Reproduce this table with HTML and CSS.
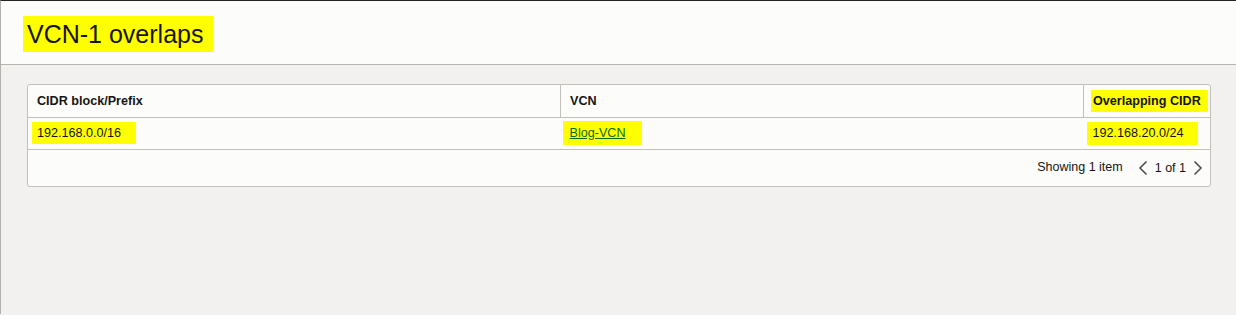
FILE: index.html
```html
<!DOCTYPE html>
<html>
<head>
<meta charset="utf-8">
<link rel="stylesheet" href="styles.css">
</head>
<body>
<div class="page">
  <header class="header">
    <h1 class="title hl">VCN-1 overlaps</h1>
  </header>
  <main class="main">
    <div class="card">
      <table class="grid">
        <thead>
          <tr>
            <th class="c1"><span class="th-text">CIDR block/Prefix</span></th>
            <th class="c2"><span class="th-text">VCN</span></th>
            <th class="c3"><span class="hl hl-h3">Overlapping CIDR</span></th>
          </tr>
        </thead>
        <tbody>
          <tr>
            <td class="c1"><span class="hl hl-b1">192.168.0.0/16</span></td>
            <td class="c2"><span class="hl hl-b2"><a class="link" href="#">Blog-VCN</a></span></td>
            <td class="c3"><span class="hl hl-b3">192.168.20.0/24</span></td>
          </tr>
        </tbody>
      </table>
      <div class="footer">
        <span class="count">Showing 1 item</span>
        <div class="pager">
          <svg class="chev" width="10" height="16" viewBox="0 0 10 16"><path d="M8.5 1.5 L2 8 L8.5 14.5" fill="none" stroke="#4a4a4a" stroke-width="1.5"/></svg>
          <span class="pages">1 of 1</span>
          <svg class="chev" width="10" height="16" viewBox="0 0 10 16"><path d="M1.5 1.5 L8 8 L1.5 14.5" fill="none" stroke="#4a4a4a" stroke-width="1.5"/></svg>
        </div>
      </div>
    </div>
  </main>
</div>
</body>
</html>
```
FILE: styles.css
```css
html, body {
  margin: 0;
  padding: 0;
  height: 100%;
}
body {
  font-family: "Liberation Sans", Arial, sans-serif;
  color: #161513;
  background: #f2f1ef;
}
.page {
  border-top: 1px solid #242322;
  border-left: 1px solid #b5b1aa;
  min-height: 314px;
  box-sizing: border-box;
  background: #f2f1ef;
}
.header {
  background: #fcfcfb;
  border-bottom: 1px solid #b9b5ae;
  padding: 15px 0 0 22px;
  height: 48px;
}
.title {
  margin: 0;
  display: inline-block;
  font-weight: normal;
  font-size: 25px;
  line-height: 36px;
  padding: 0 10px 0 4px;
  color: #161513;
}
.hl {
  background: #ffff00;
}
.main {
  padding: 19px 25px 0 26px;
}
.card {
  background: #fcfcfb;
  border: 1px solid #c3c0ba;
  border-radius: 3px;
}
.grid {
  width: 100%;
  border-collapse: collapse;
  table-layout: fixed;
  font-size: 12.6px;
}
.grid .c1 { width: 532px; }
.grid .c2 { width: 522px; }
th, td {
  text-align: left;
  padding: 0;
  vertical-align: middle;
}
thead tr {
  height: 32px;
  border-bottom: 1px solid #c3c0ba;
}
tbody tr {
  height: 32px;
  border-bottom: 1px solid #c3c0ba;
}
th {
  font-weight: bold;
}
th.c1, th.c2 {
  border-right: 1px solid #c3c0ba;
}
.th-text {
  padding-left: 9px;
}
.hl-h3 {
  display: inline-block;
  margin-left: 7px;
  padding: 0 7px 0 2px;
  line-height: 22px;
}
.hl-b1 {
  display: inline-block;
  margin-left: 4px;
  padding: 0 15px 0 5px;
  line-height: 22px;
}
.hl-b2 {
  display: inline-block;
  margin-left: 2px;
  padding: 0 16px 0 7px;
  line-height: 24px;
}
.hl-b3 {
  display: inline-block;
  margin-left: 3px;
  padding: 0 14px 0 6px;
  line-height: 23px;
}
.link {
  color: #0b6a12;
  text-decoration: underline;
}
.footer {
  height: 36px;
  display: flex;
  align-items: center;
  justify-content: flex-end;
  padding-right: 7px;
  font-size: 12.5px;
}
.count {
  margin-right: 15px;
  margin-top: -2px;
}
.pager {
  display: flex;
  align-items: center;
  gap: 7px;
}
.pages {
  color: #161513;
}
```
